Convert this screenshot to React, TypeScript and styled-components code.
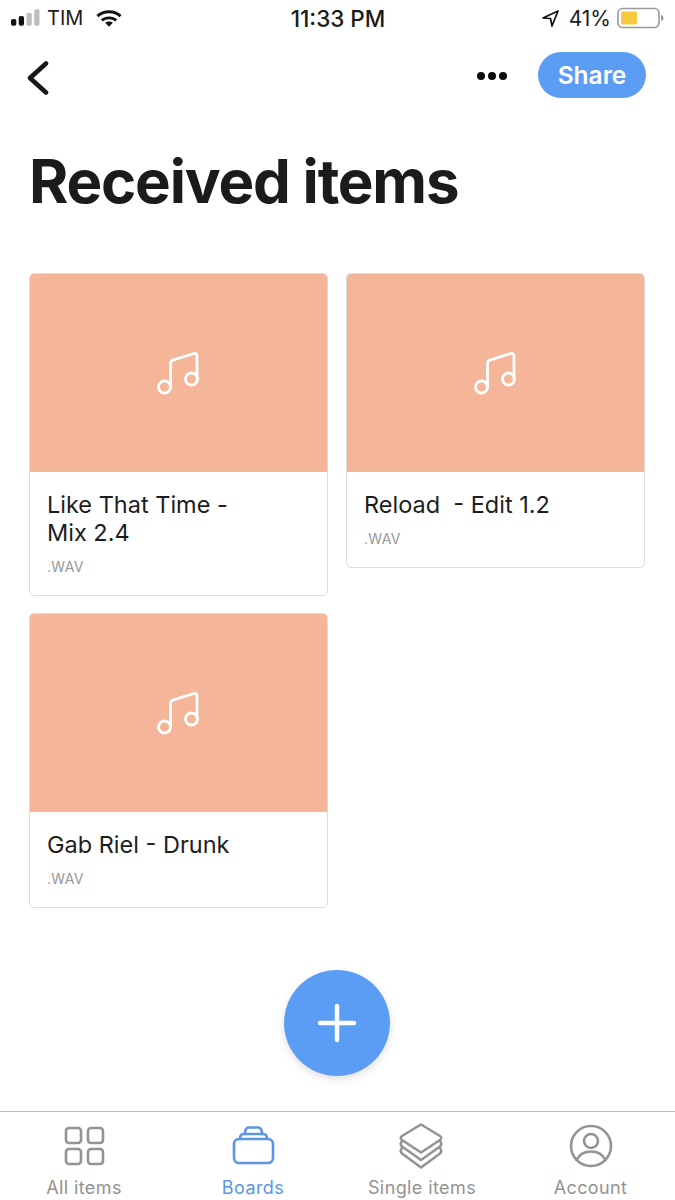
import React from "react";
import styled, { createGlobalStyle } from "styled-components";

const GlobalStyle = createGlobalStyle`
  html, body {
    margin: 0;
    padding: 0;
    background: #fff;
    font-family: "Inter", "Liberation Sans", sans-serif;
    -webkit-font-smoothing: antialiased;
  }
`;

const Page = styled.div`
  position: relative;
  width: 675px;
  height: 1200px;
  display: flex;
  flex-direction: column;
  overflow: hidden;
  background: #fff;
  color: #1a1b1d;
`;

const StatusBar = styled.div`
  display: grid;
  grid-template-columns: 1fr auto 1fr;
  align-items: center;
  height: 36px;
  padding: 0 10px 0 11px;
  font-size: 21px;
  color: #1b1b1b;
`;

const StatusLeft = styled.div`
  display: flex;
  align-items: center;
  gap: 7px;
`;

const StatusRight = styled.div`
  display: flex;
  align-items: center;
  justify-content: flex-end;
  gap: 10px;
`;

const Clock = styled.div`
  font-weight: 500;
  font-size: 22.5px;
`;

const Carrier = styled.span`
  font-size: 20px;
  margin-right: 6px;
`;

const NavBar = styled.div`
  display: flex;
  align-items: center;
  height: 78px;
  padding: 0 29px 0 26px;
`;

const BackButton = styled.div`
  display: flex;
  margin-right: auto;
  padding-top: 5px;
`;

const MoreDots = styled.div`
  display: flex;
  gap: 3px;
  margin-right: 31px;
  padding-top: 2px;
`;

const Dot = styled.span`
  width: 8px;
  height: 8px;
  border-radius: 50%;
  background: #0d0d0d;
`;

const ShareButton = styled.div`
  display: flex;
  align-items: center;
  justify-content: center;
  width: 108px;
  height: 46px;
  border-radius: 23px;
  background: #5b9df5;
  color: #fff;
  font-size: 24.5px;
  font-weight: 600;
`;

const Title = styled.h1`
  margin: 0;
  padding: 33px 0 0 29px;
  height: 129px;
  box-sizing: border-box;
  font-size: 60px;
  line-height: 68px;
  font-weight: 700;
  letter-spacing: -1.2px;
  color: #1a1b1d;
`;

const CardGrid = styled.div`
  display: grid;
  grid-template-columns: 299px 299px;
  column-gap: 18px;
  row-gap: 17px;
  align-items: start;
  padding: 30px 0 0 29px;
`;

const Card = styled.div`
  border: 1px solid #dcdcdc;
  border-radius: 5px;
  overflow: hidden;
  background: #fff;
`;

const Thumb = styled.div`
  display: flex;
  align-items: center;
  justify-content: center;
  height: 198px;
  background: #f4b598;
`;

const CardBody = styled.div`
  padding: 19px 17px 18px;
`;

const CardTitle = styled.div`
  font-size: 23.5px;
  line-height: 28px;
  color: #1c1d1f;
  white-space: pre-wrap;
`;

const CardKind = styled.div`
  margin-top: 10px;
  font-size: 14px;
  line-height: 20px;
  letter-spacing: 0.3px;
  color: #97989b;
`;

const AddButton = styled.div`
  position: absolute;
  left: 284px;
  top: 970px;
  width: 106px;
  height: 106px;
  border-radius: 50%;
  display: flex;
  align-items: center;
  justify-content: center;
  background: #5b9df5;
  box-shadow: 0 3px 9px rgba(0, 0, 0, 0.13);
`;

const TabBar = styled.div`
  margin-top: auto;
  display: grid;
  grid-template-columns: 168px 170px 168px 169px;
  height: 88px;
  border-top: 1px solid #bdbdbd;
`;

const Tab = styled.div<{ $active?: boolean }>`
  display: flex;
  flex-direction: column;
  align-items: center;
  padding-top: 11px;
  font-size: 18px;
  line-height: 22px;
  letter-spacing: 0.4px;
  color: ${(p) => (p.$active ? "#5b96e6" : "#939393")};
`;

const TabIcon = styled.svg`
  display: block;
  width: 48px;
  height: 46px;
  margin-bottom: 8px;
  fill: none;
  stroke: currentColor;
  stroke-width: 2.6;
  stroke-linejoin: round;
  stroke-linecap: round;
`;

const NoteIcon = () => (
  <svg width="44" height="44" viewBox="1 0 44 44" fill="none" stroke="#fff" strokeWidth="2.8" strokeLinecap="round" strokeLinejoin="round">
    <circle cx="8.5" cy="36" r="6" />
    <circle cx="35.5" cy="28" r="6" />
    <path d="M14.5 36V12.5c0-2 1-3.2 3-3.700L38 2.500c1.500-.4 3 .4 3 2.400V28" />
  </svg>
);

const items = [
  { name: "Like That Time -\nMix 2.4" },
  { name: "Reload  - Edit 1.2" },
  { name: "Gab Riel - Drunk" },
];

const App: React.FC = () => {
  return (
    <Page>
      <GlobalStyle />
      <StatusBar>
        <StatusLeft>
          <svg width="29" height="18" viewBox="0 0 30 18">
            <rect x="0" y="10" width="5.500" height="7" rx="2" fill="#111" />
            <rect x="8" y="7" width="5.500" height="10" rx="2" fill="#111" />
            <rect x="16" y="3.500" width="5.500" height="13.500" rx="2" fill="#bdbdbd" />
            <rect x="24" y="0" width="5.500" height="17" rx="2" fill="#bdbdbd" />
          </svg>
          <Carrier>TIM</Carrier>
          <svg width="26" height="19" viewBox="0 0 27 19" fill="none" stroke="#111" strokeWidth="3">
            <path d="M1.500 7C8 1 19 1 25.500 7" />
            <path d="M6 11.500c4-3.600 11-3.600 15 0" />
            <path d="M13.500 18l-4-4c2.200-1.800 5.800-1.800 8 0z" fill="#111" stroke="none" />
          </svg>
        </StatusLeft>
        <Clock>11:33 PM</Clock>
        <StatusRight>
          <svg width="17" height="17" viewBox="0 0 17 17" fill="none" stroke="#111" strokeWidth="1.700" strokeLinejoin="round">
            <path d="M1 8L16 1 10 16 8.500 8.500z" />
          </svg>
          <span>41%</span>
          <svg width="48" height="22" viewBox="0 0 48 22" style={{ marginLeft: -4 }}>
            <rect x="1" y="1.500" width="41" height="19" rx="4.500" fill="#fff" stroke="#9a9a9a" strokeWidth="1.600" />
            <rect x="4" y="4.500" width="16" height="13" rx="1.500" fill="#f8c93e" />
            <path d="M44 8c1.500.3 2.500 1.500 2.500 3s-1 2.700-2.500 3z" fill="#9a9a9a" />
          </svg>
        </StatusRight>
      </StatusBar>

      <NavBar>
        <BackButton>
          <svg width="24" height="34" viewBox="0 0 24 34" fill="none" stroke="#17181a" strokeWidth="4.600" strokeLinecap="round" strokeLinejoin="round">
            <path d="M20 2.500L4 17l16 14.500" />
          </svg>
        </BackButton>
        <MoreDots>
          <Dot />
          <Dot />
          <Dot />
        </MoreDots>
        <ShareButton>Share</ShareButton>
      </NavBar>

      <Title>Received items</Title>

      <CardGrid>
        {items.map((item) => (
          <Card key={item.name}>
            <Thumb>
              <NoteIcon />
            </Thumb>
            <CardBody>
              <CardTitle>{item.name}</CardTitle>
              <CardKind>.WAV</CardKind>
            </CardBody>
          </Card>
        ))}
      </CardGrid>

      <AddButton>
        <svg width="40" height="40" viewBox="0 0 40 40" stroke="#fff" strokeWidth="4.500" strokeLinecap="round">
          <path d="M20 3v34M3 20h34" />
        </svg>
      </AddButton>

      <TabBar>
        <Tab>
          <TabIcon viewBox="0 0 48 46">
            <rect x="6" y="5" width="15" height="15" rx="3" />
            <rect x="28" y="5" width="15" height="15" rx="3" />
            <rect x="6" y="26" width="15" height="15" rx="3" />
            <rect x="28" y="26" width="15" height="15" rx="3" />
          </TabIcon>
          All items
        </Tab>
        <Tab $active>
          <TabIcon viewBox="0 0 48 46">
            <rect x="5" y="16" width="39" height="24" rx="5" />
            <path d="M11 16c0-3 1-5 3.500-5h20c2.500 0 3.500 2 3.500 5" />
            <path d="M16 11c0-4 1-6.500 4-6.500h9c3 0 4 2.500 4 6.500" />
          </TabIcon>
          Boards
        </Tab>
        <Tab>
          <TabIcon viewBox="0 0 48 46">
            <path d="M23 1.500L42 13q2.500 2 0 4L23 29.500 4 17q-2.500-2 0-4z" />
            <path d="M4 18q-2.500 3 0 5.500L23 37l19-13.500q2.500-2.500 0-5.500" />
            <path d="M4 25q-2.500 3 0 5.500L23 44.500l19-14q2.500-2.500 0-5.500" />
          </TabIcon>
          Single items
        </Tab>
        <Tab>
          <TabIcon viewBox="0 0 48 46">
            <circle cx="24" cy="23" r="20" />
            <circle cx="24" cy="18" r="7" />
            <path d="M9.500 37c2.500-5 7.500-8.500 14.500-8.500s12 3.500 14.500 8.500" />
          </TabIcon>
          Account
        </Tab>
      </TabBar>
    </Page>
  );
};

export default App;
